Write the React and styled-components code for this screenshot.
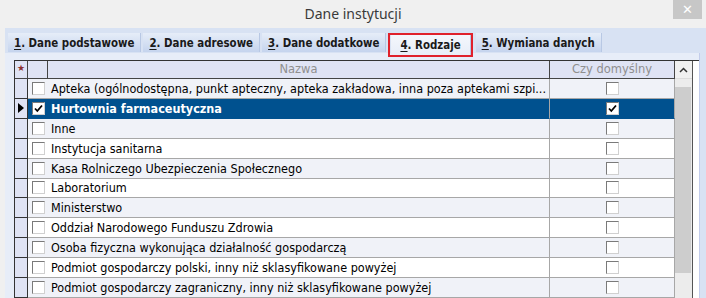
import React from "react";
import styled, { createGlobalStyle } from "styled-components";

const GlobalStyle = createGlobalStyle`
  html, body {
    margin: 0;
    padding: 0;
    background: #f0f0f0;
  }
  body {
    width: 706px;
    height: 298px;
    overflow: hidden;
  }
`;

const tabs = [
  { key: "1", label: ". Dane podstawowe" },
  { key: "2", label: ". Dane adresowe" },
  { key: "3", label: ". Dane dodatkowe" },
  { key: "4", label: ". Rodzaje", active: true },
  { key: "5", label: ". Wymiana danych" },
];

const rows = [
  { name: "Apteka (ogólnodostępna, punkt apteczny, apteka zakładowa, inna poza aptekami szpi..." },
  { name: "Hurtownia farmaceutyczna", checked: true, defaultOn: true, selected: true },
  { name: "Inne" },
  { name: "Instytucja sanitarna" },
  { name: "Kasa Rolniczego Ubezpieczenia Społecznego" },
  { name: "Laboratorium" },
  { name: "Ministerstwo" },
  { name: "Oddział Narodowego Funduszu Zdrowia" },
  { name: "Osoba fizyczna wykonująca działalność gospodarczą" },
  { name: "Podmiot gospodarczy polski, inny niż sklasyfikowane powyżej" },
  { name: "Podmiot gospodarczy zagraniczny, inny niż sklasyfikowane powyżej" },
];

const Window = styled.div`
  width: 706px;
  height: 298px;
  display: flex;
  flex-direction: column;
  background: #f0f0f0;
  font-family: "DejaVu Sans", sans-serif;
`;

const TitleBar = styled.div`
  height: 28px;
  flex: none;
  display: grid;
  grid-template-columns: 1fr auto 1fr;
  align-items: start;
`;

const Title = styled.div`
  grid-column: 2;
  padding-top: 4px;
  font-family: "Noto Sans", sans-serif;
  font-size: 14px;
  color: #3a3a3a;
`;

const CloseButton = styled.div`
  grid-column: 3;
  justify-self: end;
  width: 29px;
  height: 19px;
  margin-right: 4px;
  background: #c7c7c7;
  color: #fff;
  display: flex;
  align-items: center;
  justify-content: center;
  font-family: "DejaVu Sans", sans-serif;
  font-size: 13px;
  font-weight: bold;
`;

const Frame = styled.div`
  flex: 1;
  margin-left: 5px;
  background: #d8e2f3;
  padding-top: 5px;
  display: flex;
  flex-direction: column;
  min-height: 0;
`;

const TabStrip = styled.div`
  display: flex;
  align-items: flex-start;
  gap: 2px;
  padding-left: 3px;
  height: 20px;
  flex: none;
  position: relative;
  z-index: 1;
`;

const Tab = styled.div`
  position: relative;
  height: ${(p) => (p.$active ? "21px" : "19px")};
  margin: ${(p) => (p.$active ? "1px 3px 0 3px" : "0")};
  padding: 0 ${(p) => (p.$active ? "9px" : "6px")};
  display: flex;
  align-items: center;
  font-family: "DejaVu Sans Condensed", "DejaVu Sans", sans-serif;
  font-weight: bold;
  font-size: 11.4px;
  color: #1a1a1a;
  background: ${(p) =>
    p.$active
      ? "linear-gradient(#f4f7fc, #e8eef8)"
      : "linear-gradient(#e6edf8, #c5d4ee)"};
  border-right: 1px solid #b8c8e4;
  box-sizing: border-box;

  u {
    text-decoration: underline;
    text-underline-offset: 2px;
  }

  ${(p) =>
    p.$active &&
    `
    &::after {
      content: "";
      position: absolute;
      left: -3px;
      right: -3px;
      top: -1px;
      bottom: -2px;
      border: 2px solid #e0212b;
    }
  `}
`;

const TabBody = styled.div`
  flex: 1;
  margin-right: 6px;
  background: #e7edf8;
  border-right: 1px solid #c3cdeb;
  padding: 7px 0 0 9px;
  display: flex;
  min-height: 0;
  overflow: hidden;
`;

const GridBox = styled.div`
  flex: 1;
  display: flex;
  border-left: 1px solid #333;
  border-top: 1px solid #333;
  background: #fff;
  min-height: 0;
`;

const Table = styled.div`
  width: 660px;
  display: flex;
  flex-direction: column;
`;

const HeaderRow = styled.div`
  display: grid;
  grid-template-columns: 13px 20px 502px 125px;
  height: 18px;
  background: #dfe3f4;
  border-bottom: 1px solid #444;
  box-sizing: border-box;
`;

const HeaderCell = styled.div`
  border-right: 1px solid #444;
  display: flex;
  align-items: center;
  justify-content: center;
  font-family: "DejaVu Sans", sans-serif;
  font-size: 11.5px;
  color: #8f8f8f;
`;

const Star = styled.span`
  font-size: 9px;
  color: #8c2f2f;
  align-self: flex-start;
  margin-top: 2px;
`;

const Row = styled.div`
  display: grid;
  grid-template-columns: 13px 1fr 125px;
  height: 20px;
  box-sizing: border-box;
`;

const Indicator = styled.div`
  background: #dfe3f4;
  border-right: 1px solid #333;
  border-bottom: 1px solid #333;
  display: flex;
  align-items: center;
  justify-content: center;
`;

const NameCell = styled.div`
  display: flex;
  align-items: center;
  gap: 6px;
  padding-left: 4px;
  background: ${(p) => (p.$selected ? "#00518f" : p.$alt ? "#f0f2f8" : "#fff")};
  color: ${(p) => (p.$selected ? "#fff" : "#000")};
  border-bottom: 1px solid ${(p) => (p.$selected ? "#00518f" : "#a7a7a7")};
  border-right: 1px solid #a7a7a7;
  font-family: "DejaVu Sans Condensed", "DejaVu Sans", sans-serif;
  font-size: 12.5px;
  font-weight: ${(p) => (p.$selected ? "bold" : "normal")};
  white-space: nowrap;
  overflow: hidden;
`;

const FlagCell = styled.div`
  display: flex;
  align-items: center;
  justify-content: center;
  background: ${(p) => (p.$selected ? "#00518f" : p.$alt ? "#f0f2f8" : "#fff")};
  border-bottom: 1px solid ${(p) => (p.$selected ? "#00518f" : "#a7a7a7")};
  border-right: 1px solid #a7a7a7;
`;

const Box = styled.span`
  width: 13px;
  height: 13px;
  flex: none;
  box-sizing: border-box;
  background: #fff;
  border-top: 1px solid #7a7a7a;
  border-left: 1px solid #7a7a7a;
  border-bottom: 1px solid #d0d0d0;
  border-right: 1px solid #d0d0d0;
  display: flex;
  align-items: center;
  justify-content: center;
`;

const ScrollBar = styled.div`
  width: 17px;
  display: flex;
  flex-direction: column;
  background: #ececec;
  border-right: 1px solid #555;
`;

const ScrollButton = styled.div`
  height: 18px;
  flex: none;
  display: flex;
  align-items: center;
  justify-content: center;
  background: #f0f0f0;
  border-bottom: 1px solid #dcdcdc;
  box-sizing: border-box;
`;

const Thumb = styled.div`
  height: 186px;
  margin: 8px 1px 0 0;
  background: #cdcdcd;
  flex: none;
`;

const Check = () => (
  <svg width="9" height="9" viewBox="0 0 9 9">
    <path d="M1 4.5 L3.3 7 L8 1.5" fill="none" stroke="#000" strokeWidth="1.8" />
  </svg>
);

const Pointer = () => (
  <svg width="6" height="10" viewBox="0 0 6 10">
    <path d="M0 0 L6 5 L0 10 Z" fill="#000" />
  </svg>
);

const Checkbox = ({ checked }) => <Box>{checked && <Check />}</Box>;

export default function App() {
  return (
    <>
      <GlobalStyle />
      <Window>
        <TitleBar>
          <Title>Dane instytucji</Title>
          <CloseButton>✕</CloseButton>
        </TitleBar>
        <Frame>
          <TabStrip>
            {tabs.map((t) => (
              <Tab key={t.key} $active={t.active}>
                <u>{t.key}</u>
                {t.label}
              </Tab>
            ))}
          </TabStrip>
          <TabBody>
            <GridBox>
              <Table>
                <HeaderRow>
                  <HeaderCell>
                    <Star>★</Star>
                  </HeaderCell>
                  <HeaderCell />
                  <HeaderCell>Nazwa</HeaderCell>
                  <HeaderCell>Czy domyślny</HeaderCell>
                </HeaderRow>
                {rows.map((r, i) => (
                  <Row key={r.name}>
                    <Indicator>{r.selected && <Pointer />}</Indicator>
                    <NameCell $selected={r.selected} $alt={i % 2 === 0}>
                      <Checkbox checked={r.checked} />
                      {r.name}
                    </NameCell>
                    <FlagCell $selected={r.selected} $alt={i % 2 === 0}>
                      <Checkbox checked={r.defaultOn} />
                    </FlagCell>
                  </Row>
                ))}
              </Table>
              <ScrollBar>
                <ScrollButton>
                  <svg width="9" height="6" viewBox="0 0 9 6">
                    <path d="M1 5 L4.5 1.5 L8 5" fill="none" stroke="#333" strokeWidth="1.5" />
                  </svg>
                </ScrollButton>
                <Thumb />
              </ScrollBar>
            </GridBox>
          </TabBody>
        </Frame>
      </Window>
    </>
  );
}
